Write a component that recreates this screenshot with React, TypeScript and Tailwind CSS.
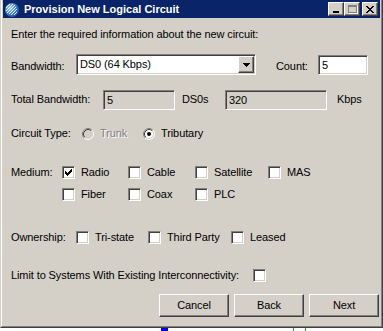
import React from "react";

const sunken =
  "border border-t-[#808080] border-l-[#808080] border-b-white border-r-white shadow-[inset_1px_1px_0_#404040,inset_-1px_-1px_0_#d4d0c8]";
const raised =
  "border border-t-white border-l-white border-b-[#404040] border-r-[#404040] shadow-[inset_-1px_-1px_0_#808080]";

function Check({ checked = false }: { checked?: boolean }) {
  return (
    <div className={`w-[13px] h-[13px] shrink-0 bg-white ${sunken} flex items-center justify-center`}>
      {checked && (
        <svg width="7" height="7" viewBox="0 0 7 7" shapeRendering="crispEdges">
          <rect x="6" y="0" width="1" height="1" fill="#000" />
          <rect x="5" y="1" width="2" height="1" fill="#000" />
          <rect x="0" y="2" width="1" height="1" fill="#000" />
          <rect x="4" y="2" width="3" height="1" fill="#000" />
          <rect x="0" y="3" width="2" height="1" fill="#000" />
          <rect x="3" y="3" width="3" height="1" fill="#000" />
          <rect x="0" y="4" width="5" height="1" fill="#000" />
          <rect x="1" y="5" width="3" height="1" fill="#000" />
          <rect x="2" y="6" width="1" height="1" fill="#000" />
        </svg>
      )}
    </div>
  );
}

function Radio({ checked = false, disabled = false }: { checked?: boolean; disabled?: boolean }) {
  return (
    <svg width="12" height="12" viewBox="0 0 12 12" className="shrink-0">
      <circle cx="6" cy="6" r="5" fill={disabled ? "#d4d0c8" : "#fff"} />
      <path d="M2.11 9.89 A5.5 5.5 0 0 1 9.89 2.11" stroke="#808080" strokeWidth="1" fill="none" />
      <path d="M9.89 2.11 A5.5 5.5 0 0 1 2.11 9.89" stroke="#ffffff" strokeWidth="1" fill="none" />
      <path d="M2.82 9.18 A4.5 4.5 0 0 1 9.18 2.82" stroke="#404040" strokeWidth="1" fill="none" />
      <path d="M9.18 2.82 A4.5 4.5 0 0 1 2.82 9.18" stroke="#d4d0c8" strokeWidth="1" fill="none" />
      {checked && <circle cx="6" cy="6" r="2" fill="#000" />}
    </svg>
  );
}

function CheckItem({ label, w, checked = false }: { label: string; w: string; checked?: boolean }) {
  return (
    <div className={`flex items-start h-[13px] ${w}`}>
      <Check checked={checked} />
      <span className="ml-[6px] leading-[13px] whitespace-nowrap">{label}</span>
    </div>
  );
}

function Button({ label }: { label: string }) {
  return (
    <div className={`w-[70px] h-[23px] ${raised} flex items-center justify-center leading-[13px]`}>
      {label}
    </div>
  );
}

function TitleButton({ children }: { children: React.ReactNode }) {
  return (
    <div className={`w-[16px] h-[14px] bg-[#d4d0c8] ${raised} flex items-center justify-center`}>
      {children}
    </div>
  );
}

export default function App() {
  return (
    <div
      className="w-[383px] h-[331px] bg-white overflow-hidden text-[11px] tracking-[-0.1px] text-black"
      style={{ fontFamily: '"Liberation Sans", Arial, sans-serif' }}
    >
      <div className="w-[383px] h-[328px] border-l border-r border-b border-l-[#d4d0c8] border-r-[#404040] border-b-[#404040]">
        <div className="h-full border-l border-r border-b border-l-white border-r-[#808080] border-b-[#808080]">
          <div className="h-full bg-[#d4d0c8] px-[1px] flex flex-col">
            {/* Title bar */}
            <div className="h-[18px] bg-[#0a246a] flex items-center shrink-0">
              <svg width="16" height="16" viewBox="0 0 16 16" className="ml-[1px] mt-[1px]">
                <defs>
                  <radialGradient id="g" cx="0.35" cy="0.35" r="0.75">
                    <stop offset="0" stopColor="#9fd0ff" />
                    <stop offset="0.6" stopColor="#3a7fd0" />
                    <stop offset="1" stopColor="#1a4b9a" />
                  </radialGradient>
                  <clipPath id="c">
                    <circle cx="8" cy="8" r="7" />
                  </clipPath>
                </defs>
                <circle cx="8" cy="8" r="7" fill="url(#g)" />
                <g clipPath="url(#c)" stroke="#ffffff" strokeWidth="1" opacity="0.9">
                  <line x1="2" y1="6" x2="6" y2="2" />
                  <line x1="2" y1="9" x2="9" y2="2" />
                  <line x1="3" y1="11" x2="11" y2="3" />
                  <line x1="5" y1="12" x2="12" y2="5" />
                  <line x1="7" y1="13" x2="13" y2="7" />
                  <line x1="10" y1="13" x2="13" y2="10" />
                </g>
              </svg>
              <span className="ml-[4px] font-bold text-white leading-[13px] tracking-normal whitespace-nowrap">
                Provision New Logical Circuit
              </span>
              <div className="ml-auto flex items-center mr-[2px]">
                <TitleButton>
                  <div className="w-[6px] h-[2px] bg-black mt-[6px] -ml-[1px]" />
                </TitleButton>
                <TitleButton>
                  <div className="w-[9px] h-[8px] border border-t-2 border-[#808080] shadow-[1px_1px_0_#fff]" />
                </TitleButton>
                <div className="ml-[2px]">
                  <TitleButton>
                    <svg width="8" height="7" viewBox="0 0 8 7" shapeRendering="crispEdges">
                      <path d="M0 0h2v1h-2zM6 0h2v1h-2zM1 1h2v1h-2zM5 1h2v1h-2zM2 2h4v1h-4zM3 3h2v1h-2zM2 4h4v1h-4zM1 5h2v1h-2zM5 5h2v1h-2zM0 6h2v1h-2zM6 6h2v1h-2z" fill="#000" />
                    </svg>
                  </TitleButton>
                </div>
              </div>
            </div>

            {/* Content */}
            <div className="flex flex-col pl-[8px] pr-[1px]">
              <div className="mt-[10px] leading-[13px] h-[13px] whitespace-nowrap">
                Enter the required information about the new circuit:
              </div>

              {/* Bandwidth */}
              <div className="mt-[13px] flex items-start h-[21px]">
                <span className="w-[65px] mt-[6px] leading-[13px]">Bandwidth:</span>
                <div className={`w-[180px] h-[21px] bg-white ${sunken} flex items-center`}>
                  <span className="ml-[3px] leading-[13px] flex-1">DS0 (64 Kbps)</span>
                  <div className={`w-[16px] h-[17px] mr-[1px] bg-[#d4d0c8] ${raised} flex items-center justify-center`}>
                    <svg width="7" height="4" viewBox="0 0 7 4" shapeRendering="crispEdges">
                      <path d="M0 0h7v1h-7zM1 1h5v1h-5zM2 2h3v1h-3zM3 3h1v1h-1z" fill="#000" />
                    </svg>
                  </div>
                </div>
                <span className="ml-[20px] w-[42px] mt-[6px] leading-[13px]">Count:</span>
                <div className={`mt-[1px] w-[50px] h-[20px] bg-white ${sunken} flex items-center`}>
                  <span className="ml-[3px] leading-[13px]">5</span>
                </div>
              </div>

              {/* Total Bandwidth */}
              <div className="mt-[15px] flex items-start h-[20px]">
                <span className="w-[92px] mt-[3px] leading-[13px]">Total Bandwidth:</span>
                <div className={`w-[72px] h-[20px] bg-[#d4d0c8] ${sunken} flex items-center`}>
                  <span className="ml-[3px] leading-[13px]">5</span>
                </div>
                <span className="w-[50px] pl-[7px] mt-[3px] leading-[13px]">DS0s</span>
                <div className={`w-[102px] h-[20px] bg-[#d4d0c8] ${sunken} flex items-center`}>
                  <span className="ml-[3px] leading-[13px]">320</span>
                </div>
                <span className="ml-[10px] mt-[3px] leading-[13px]">Kbps</span>
              </div>

              {/* Circuit Type */}
              <div className="mt-[17px] flex items-start h-[13px]">
                <span className="w-[71px] leading-[13px]">Circuit Type:</span>
                <div className="w-[61px] flex items-start">
                  <div className="mt-[1px]">
                    <Radio disabled />
                  </div>
                  <span className="ml-[6px] leading-[13px] text-[#808080] [text-shadow:1px_1px_0_#fff]">Trunk</span>
                </div>
                <div className="flex items-start">
                  <div className="mt-[1px]">
                    <Radio checked />
                  </div>
                  <span className="ml-[6px] leading-[13px]">Tributary</span>
                </div>
              </div>

              {/* Medium */}
              <div className="mt-[26px] flex items-start h-[13px]">
                <span className="w-[51px] leading-[13px]">Medium:</span>
                <CheckItem label="Radio" w="w-[66px]" checked />
                <CheckItem label="Cable" w="w-[67px]" />
                <CheckItem label="Satellite" w="w-[73px]" />
                <CheckItem label="MAS" w="w-[60px]" />
              </div>
              <div className="mt-[9px] flex items-start h-[13px]">
                <span className="w-[51px]" />
                <CheckItem label="Fiber" w="w-[66px]" />
                <CheckItem label="Coax" w="w-[67px]" />
                <CheckItem label="PLC" w="w-[73px]" />
              </div>

              {/* Ownership */}
              <div className="mt-[30px] flex items-start h-[13px]">
                <span className="w-[65px] leading-[13px]">Ownership:</span>
                <CheckItem label="Tri-state" w="w-[72px]" />
                <CheckItem label="Third Party" w="w-[83px]" />
                <CheckItem label="Leased" w="w-[70px]" />
              </div>

              {/* Limit */}
              <div className="mt-[25px] flex items-start h-[13px]">
                <span className="w-[242px] leading-[13px] whitespace-nowrap">
                  Limit to Systems With Existing Interconnectivity:
                </span>
                <Check />
              </div>

              {/* Buttons */}
              <div className="mt-[12px] flex justify-end gap-[5px]">
                <Button label="Cancel" />
                <Button label="Back" />
                <Button label="Next" />
              </div>
            </div>
          </div>
        </div>
      </div>
      <div className="h-[3px] flex items-start">
        <div className="ml-[161px] w-[7px] h-[3px] bg-[#0000ff]" />
        <div className="ml-[125px] w-[1px] h-[3px] bg-[#00c000]" />
        <div className="ml-[11px] w-[1px] h-[3px] bg-[#00c000]" />
      </div>
    </div>
  );
}
